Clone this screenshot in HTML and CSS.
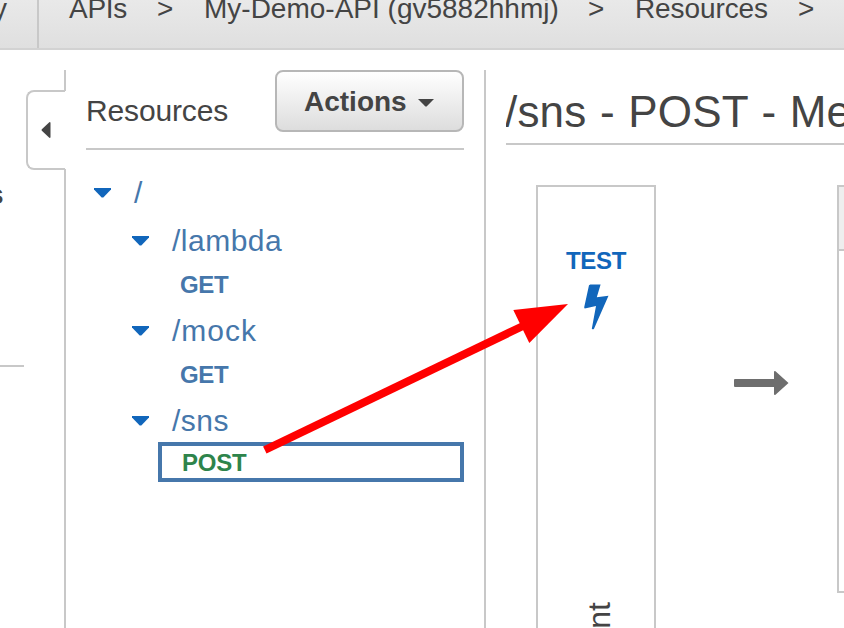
FILE: index.html
```html
<!DOCTYPE html>
<html lang="en">
<head>
<meta charset="utf-8">
<title>API Gateway</title>
<link rel="stylesheet" href="styles.css">
</head>
<body>
<header class="topbar">
  <div class="brand"><span>y</span></div>
  <nav class="crumbs">
    <span class="c-apis">APIs</span><span class="sep">&gt;</span>
    <span class="c-name">My-Demo-API (gv5882hhmj)</span><span class="sep">&gt;</span>
    <span class="c-res">Resources</span><span class="sep">&gt;</span>
  </nav>
</header>
<div class="layout">
  <aside class="nav"><div class="nav-item"><b>s</b></div></aside>
  <div class="rail">
    <div class="rail-top"></div>
    <div class="tab"><svg width="10" height="18" viewBox="0 0 10 18"><path d="M9.5 1.5V16.5L8.6 17 .6 9.6V8.4L8.6 1z" fill="#444"/></svg></div>
    <div class="rail-rest"></div>
  </div>
  <section class="resources">
    <div class="res-head">
      <h2>Resources</h2>
      <button class="actions"><span>Actions</span><svg width="16" height="8" viewBox="0 0 16 8"><path d="M0 0H16L8.6 7.5H7.4z" fill="#444"/></svg></button>
    </div>
    <div class="tree">
      <div class="row root"><svg class="caret" viewBox="0 0 17 10"><path d="M0 0H17V1.5L9.3 9.5H7.7L0 1.5z"/></svg><span>/</span></div>
      <div class="row"><svg class="caret" viewBox="0 0 17 10"><path d="M0 0H17V1.5L9.3 9.5H7.7L0 1.5z"/></svg><span>/lambda</span></div>
      <div class="method">GET</div>
      <div class="row mock"><svg class="caret" viewBox="0 0 17 10"><path d="M0 0H17V1.5L9.3 9.5H7.7L0 1.5z"/></svg><span>/mock</span></div>
      <div class="method">GET</div>
      <div class="row sns"><svg class="caret" viewBox="0 0 17 10"><path d="M0 0H17V1.5L9.3 9.5H7.7L0 1.5z"/></svg><span>/sns</span></div>
      <div class="selected">POST</div>
    </div>
  </section>
  <main class="main">
    <h1>/sns - POST - Me</h1>
    <div class="flow">
      <div class="client">
        <div class="test">TEST</div>
        <svg class="bolt" width="26" height="46" viewBox="0 0 26 46"><path d="M6.3 .5H16.6L12.8 13.3 24.5 11.8 10 44.7Q9 46 7.8 44.7L12 22 .8 24.5Q.2 24.3 .2 23.3L5 1.3z" fill="#1166bb"/></svg>
        <div class="vertical">nt</div>
      </div>
      <svg class="arrow" width="55" height="26" viewBox="0 0 55 26"><path d="M1 9H40V2Q40 .8 41.5 1.2L54.5 13 41.5 24.8Q40 25.2 40 24V17H1Q0 17 0 16V10Q0 9 1 9z" fill="#6e6e6e"/></svg>
      <div class="request"><div class="request-head"></div></div>
    </div>
  </main>
</div>
<svg class="pointer" width="844" height="628" viewBox="0 0 844 628"><path d="M264.8 450L524 325.5" stroke="#f00" stroke-width="8"/><path d="M568 304L513.3 310 529.3 343z" fill="#f00"/></svg>
</body>
</html>
```
FILE: styles.css
```css
* { box-sizing: border-box; }
body {
  margin: 0;
  height: 628px;
  overflow: hidden;
  position: relative;
  display: flex;
  flex-direction: column;
  background: #fff;
  color: #444;
  font-family: "Liberation Sans", Arial, sans-serif;
}
svg { display: block; flex: none; }
.topbar {
  flex: none;
  height: 50px;
  display: flex;
  overflow: hidden;
  background: linear-gradient(#e9e9e9, #dfdfdf);
  border-bottom: 2px solid #d2d2d2;
  font-size: 28px;
  line-height: 36px;
  white-space: nowrap;
}
.brand {
  flex: none;
  width: 39px;
  border-right: 2px solid #c8c8c8;
  display: flex;
}
.brand span { margin: -9px 0 0 -7px; }
.crumbs { display: flex; flex: none; margin: -9px 0 0 30px; }
.crumbs span { flex: none; }
.c-apis { width: 88px; letter-spacing: -0.3px; }
.sep { width: 47px; }
.c-name { width: 384px; }
.c-res { width: 163px; letter-spacing: -0.1px; }
.layout { flex: 1; min-height: 0; display: flex; }
.nav { width: 26px; padding-top: 128px; }
.nav-item {
  width: 24px;
  height: 189px;
  border-bottom: 2px solid #c8c8c8;
  font-size: 28px;
  line-height: 34px;
}
.nav-item b { margin-left: -12px; }
.rail { width: 40px; padding-top: 20px; display: flex; flex-direction: column; }
.rail-top { height: 21px; margin-bottom: -1px; border-right: 2px solid #c8c8c8; }
.tab {
  height: 80px;
  width: 39px;
  border: 2px solid #c8c8c8;
  border-right: 0;
  border-radius: 8px 0 0 8px;
  padding: 29px 0 0 13px;
}
.rail-rest { flex: 1; margin-top: -1px; border-right: 2px solid #c8c8c8; }
.resources {
  width: 420px;
  margin-top: 20px;
  padding: 0 20px;
  border-right: 2px solid #c8c8c8;
}
.res-head {
  height: 80px;
  display: flex;
  justify-content: space-between;
  border-bottom: 2px solid #c8c8c8;
}
h2 { margin: 20px 0 0; font-size: 30px; font-weight: 400; line-height: 42px; letter-spacing: -0.15px; }
.actions {
  width: 189px;
  height: 62px;
  border: 2px solid #b7b7b7;
  border-radius: 8px;
  background: linear-gradient(#fff, #ddd);
  padding: 2px 0 0 27px;
  display: flex;
  align-items: center;
  gap: 11px;
  font: 700 28px "Liberation Sans", Arial, sans-serif;
  color: #444;
}
.actions svg { margin-top: 2px; }
.tree { padding-top: 20px; color: #4677ab; }
.row {
  height: 48px;
  margin-left: 46px;
  display: flex;
  gap: 23px;
  font-size: 30px;
  line-height: 48px;
  letter-spacing: 0.5px;
}
.root { height: 47px; margin-left: 8px; line-height: 46px; }
.root .caret { margin-top: 18px; }
.mock { letter-spacing: 1px; }
.sns { height: 45px; }
.caret { width: 17px; height: 10px; margin-top: 19px; fill: #1166bb; }
.method {
  height: 42px;
  padding-left: 94px;
  font-size: 24px;
  font-weight: 700;
  line-height: 40px;
  letter-spacing: -0.3px;
}
.selected {
  height: 40px;
  margin-left: 72px;
  padding-left: 20px;
  border: 4px solid #4677ab;
  color: #2e844b;
  font-size: 24px;
  font-weight: 700;
  line-height: 33px;
  letter-spacing: -0.2px;
}
.main { flex: 1; min-width: 0; margin: 20px 0 0 20px; display: flex; flex-direction: column; overflow: hidden; }
h1 {
  flex: none;
  margin: 0;
  height: 75px;
  padding-top: 12px;
  border-bottom: 2px solid #c8c8c8;
  font-size: 44px;
  font-weight: 400;
  line-height: 60px;
  letter-spacing: 0.2px;
  word-spacing: 1px;
  text-indent: -1px;
  white-space: nowrap;
  overflow: hidden;
}
.flow { flex: 1; display: flex; padding: 40px 0 0 30px; }
.client {
  flex: none;
  width: 120px;
  border: 2px solid #c8c8c8;
  border-bottom: 0;
  padding-top: 58px;
}
.test { color: #1166bb; font-size: 24px; font-weight: 700; line-height: 32px; letter-spacing: -0.3px; text-align: center; }
.bolt { margin: 7px 0 0 46px; }
.vertical {
  margin: 272px 0 0 43px;
  width: 36px;
  font-size: 32px;
  line-height: 36px;
  writing-mode: vertical-rl;
  transform: rotate(180deg);
}
.arrow { margin: 185px 48px 0 78px; }
.request { flex: none; width: 60px; height: 408px; border: 2px solid #c8c8c8; }
.request-head { height: 64px; background: #eee; border-bottom: 2px solid #c8c8c8; }
.pointer { position: absolute; left: 0; top: 0; pointer-events: none; }
```
